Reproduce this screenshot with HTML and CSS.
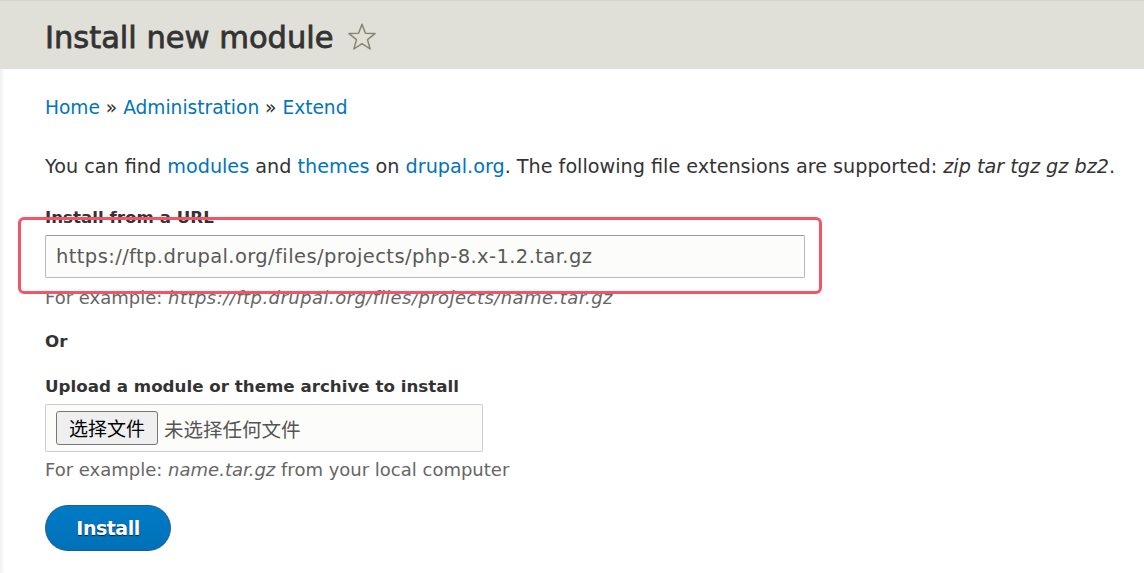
FILE: index.html
```html
<!DOCTYPE html>
<html lang="en">
<head>
<meta charset="utf-8">
<title>Install new module</title>
<link rel="stylesheet" href="styles.css">
</head>
<body>
<header class="page-header">
  <h1 class="page-title">Install new module <svg class="star" width="30" height="30" viewBox="0 0 30 30"><path d="M15 2.2 L18.4 11.3 L28 11.6 L20.5 17.6 L23.1 27 L15 21.6 L6.9 27 L9.5 17.6 L2 11.6 L11.6 11.3 Z" fill="none" stroke="#868672" stroke-width="1.5" stroke-linejoin="round"/></svg></h1>
</header>
<main class="content">
  <nav class="breadcrumb"><a href="#">Home</a> » <a href="#">Administration</a> » <a href="#">Extend</a></nav>
  <p class="intro">You can find <a href="#">modules</a> and <a href="#">themes</a> on <a href="#">drupal.org</a>. The following file extensions are supported: <em>zip tar tgz gz bz2</em>.</p>
  <div class="form-item url-item">
    <label class="label">Install from a URL</label>
    <div class="text-input">https://ftp.drupal.org/files/projects/php-8.x-1.2.tar.gz</div>
    <div class="description">For example: <em class="url-example">https://ftp.drupal.org/files/projects/name.tar.gz</em></div>
    <div class="highlight"></div>
  </div>
  <div class="or">Or</div>
  <div class="form-item upload-item">
    <label class="label">Upload a module or theme archive to install</label>
    <div class="file-input"><span class="file-btn">选择文件</span><span class="file-none">未选择任何文件</span></div>
    <div class="description">For example: <em>name.tar.gz</em> from your local computer</div>
  </div>
  <button class="install">Install</button>
</main>
</body>
</html>
```
FILE: styles.css
```css
html, body { margin: 0; padding: 0; }
body {
  font-family: "DejaVu Sans", "Noto Sans CJK SC", sans-serif;
  font-size: 19px;
  color: #333;
  background: #fff;
  width: 1144px;
  height: 573px;
  overflow: hidden;
  box-shadow: inset 5px 0 4px -3px #eee;
}
a { color: #0074bd; text-decoration: none; }
.page-header {
  background: #e0e0d8;
  height: 69px;
  padding: 0 45px;
  border-top: 1px solid #d4d4cc;
  box-sizing: border-box;
}
.page-title {
  margin: 0;
  font-size: 30.5px;
  font-weight: normal;
  -webkit-text-stroke: 0.8px #333;
  color: #333;
  line-height: 1;
  padding-top: 22px;
  display: flex;
  align-items: center;
  gap: 13px;
}
.star { display: block; margin-top: -2px; }
.content { padding: 0 45px; }
.breadcrumb { margin-top: 27px; line-height: 24px; font-size: 18.6px; }
.intro { margin: 35px 0 0; line-height: 24px; white-space: nowrap; font-size: 19.2px; }
.form-item { position: relative; }
.label { display: block; font-weight: bold; font-size: 16.7px; line-height: 22px; }
.url-item .label { margin-top: 27px; }
.text-input {
  margin-top: 7px;
  width: 760px;
  height: 43px;
  box-sizing: border-box;
  border: 1px solid #b8b8b8;
  border-top-color: #999;
  border-radius: 2px;
  background: #fcfcfa;
  padding: 0 10px;
  line-height: 41px;
  font-size: 19.5px;
  letter-spacing: 0.4px;
  color: #595959;
  white-space: nowrap;
}
.description { color: #666; font-size: 18px; line-height: 22px; }
.url-item .description { margin-top: 9px; }
.upload-item .description { margin-top: 7px; }
.description em { font-style: italic; }
.description .url-example { letter-spacing: 0.45px; }
.highlight {
  position: absolute;
  left: -27px;
  top: 11px;
  width: 804px;
  height: 77px;
  box-sizing: border-box;
  border: 3px solid #f25568;
  border-radius: 6px;
}
.or { font-weight: bold; font-size: 16.7px; line-height: 22px; margin-top: 21px; }
.upload-item .label { margin-top: 23px; }
.file-input {
  margin-top: 7px;
  width: 438px;
  height: 48px;
  box-sizing: border-box;
  border: 1px solid #ccc;
  border-radius: 2px;
  background: #fcfcfa;
  display: flex;
  align-items: center;
  padding-left: 10px;
  gap: 6px;
}
.file-btn {
  font-family: "Noto Sans CJK SC", sans-serif;
  font-size: 19px;
  color: #000;
  background: #efefef;
  border: 1px solid #767676;
  border-radius: 3px;
  height: 34px;
  line-height: 32px;
  box-sizing: border-box;
  padding: 0 12px;
}
.file-none { font-family: "Noto Sans CJK SC", sans-serif; font-size: 19.5px; color: #555; }
.install {
  display: block;
  margin-top: 24px;
  width: 126px;
  height: 46px;
  border-radius: 23px;
  border: 1px solid #1e5c90;
  background: linear-gradient(#007bc6, #0071b8);
  color: #fff;
  font-family: "DejaVu Sans", sans-serif;
  font-weight: bold;
  font-size: 19px;
  text-shadow: 0 1px 1px #00294d;
  padding: 0;
  letter-spacing: -0.5px;
}
```
